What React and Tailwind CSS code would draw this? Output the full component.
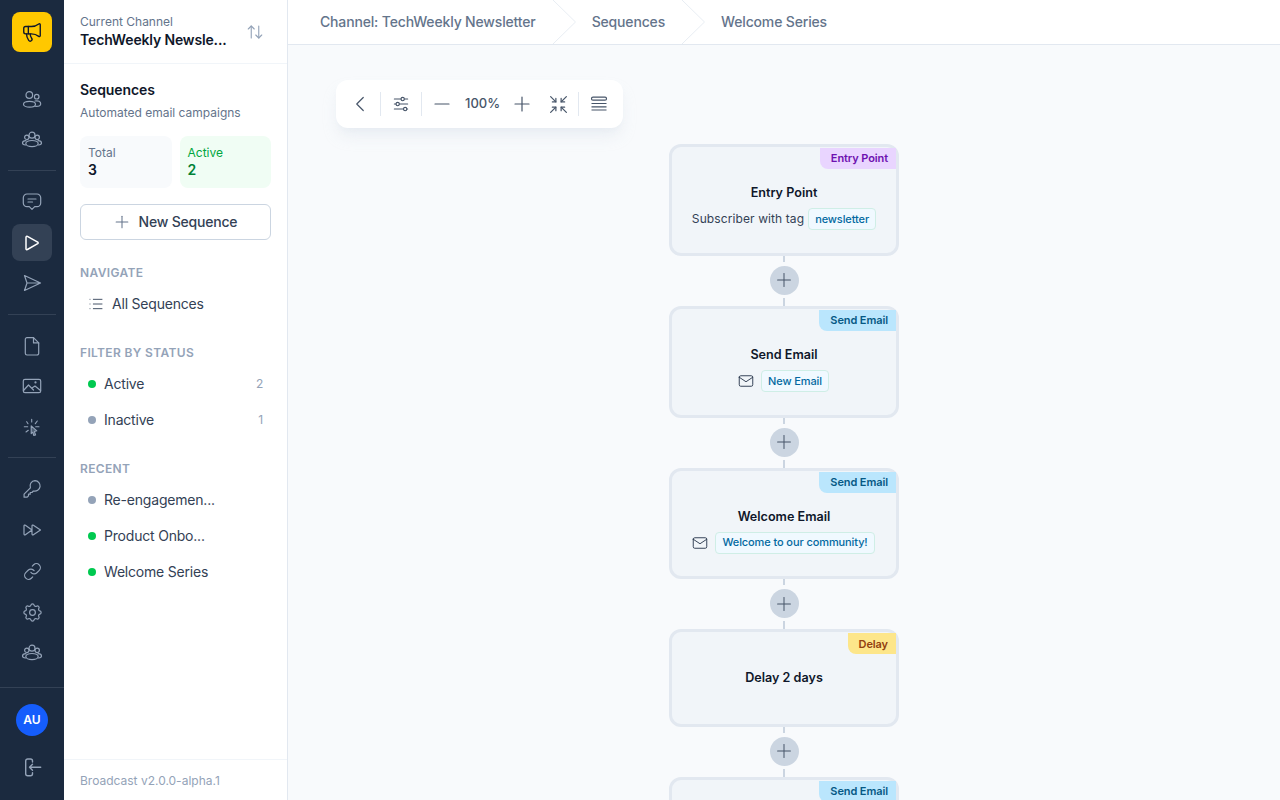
import React from 'react';
import { Megaphone, ArrowUpDown, Plus, List, ChevronLeft, Minus, Link } from 'lucide-react';
import { TbSettings, TbAdjustmentsHorizontal, TbArrowsMinimize, TbMail } from 'react-icons/tb';

// rail icons, drawn on a 24 box
const RailSvg = ({ children, strokeWidth = 1.2 }) => (
  <svg className="w-6 h-6" viewBox="0 0 24 24" fill="none" stroke="currentColor" strokeWidth={strokeWidth} strokeLinecap="round" strokeLinejoin="round">
    {children}
  </svg>
);

const UsersIcon = () => (
  <RailSvg>
    <circle cx="9.3" cy="8" r="3.3" />
    <circle cx="16.7" cy="9.7" r="2.3" />
    <ellipse cx="9.5" cy="17.2" rx="6" ry="2.9" />
    <path d="M15 14c3-.7 5.9.5 5.7 3-.1 1.5-2 2.5-5 2.4" />
  </RailSvg>
);

const GroupIcon = () => (
  <RailSvg>
    <circle cx="12" cy="7.2" r="3" />
    <circle cx="6.8" cy="9.3" r="2.2" />
    <circle cx="17.2" cy="9.3" r="2.2" />
    <ellipse cx="12" cy="15.6" rx="6.2" ry="3.1" />
    <path d="M6 12.7c-2 .1-3.5 1-3.5 2.2 0 1 1.2 1.8 3 2.1M18 12.7c2 .1 3.5 1 3.5 2.2 0 1-1.2 1.8-3 2.1" />
  </RailSvg>
);

const MessageIcon = () => (
  <RailSvg>
    <path d="M7 4h10a3.7 3.7 0 0 1 3.7 3.7V13a3.7 3.7 0 0 1-3.7 3.7h-2.3L12 19.4l-2.7-2.7H7A3.7 3.7 0 0 1 3.3 13V7.7A3.7 3.7 0 0 1 7 4z" />
    <path d="M8 9h8M8 12h4.5" />
  </RailSvg>
);

const PlayIcon = () => (
  <RailSvg strokeWidth={1.5}>
    <path d="M6 6.2c0-.8.8-1.2 1.4-.9l10.3 5.8c.6.4.6 1.2 0 1.6L7.4 18.5c-.6.4-1.4 0-1.4-.8z" />
  </RailSvg>
);

const SendIcon = () => (
  <RailSvg>
    <path d="M4.5 4.5 20.5 12 4.5 19.5 7 12zM7 12h13.5" />
  </RailSvg>
);

const FileIcon = () => (
  <RailSvg>
    <path d="M7 3.7h6.5l5.2 5.2v10.4a1.7 1.7 0 0 1-1.7 1.7H7a1.7 1.7 0 0 1-1.7-1.7V5.4A1.7 1.7 0 0 1 7 3.7z" />
    <path d="M13.5 3.7v5.2h5.2" />
  </RailSvg>
);

const PhotoIcon = () => (
  <RailSvg>
    <rect x="3.3" y="5.3" width="17.4" height="13.4" rx="1.7" />
    <path d="M3.5 16.5l5-5.5 5 5M12 14l3-2 5.5 4.5" />
    <circle cx="15.5" cy="8.4" r=".5" />
  </RailSvg>
);

const ClickIcon = () => (
  <RailSvg strokeWidth={1.1}>
    <path d="M11.7 4.3V7M4.3 11.7h3.4M6.7 6.7 8 8.7M17.3 6l-2 2.7M19 11.7h-3.3M8.3 15.3 6 17" />
    <path d="M11.2 10.8l5.6 5-2.4.8 1.2 3.4-1.8.5-1-3.3-1.6 1.4z" fill="currentColor" fillOpacity=".45" />
  </RailSvg>
);

const KeyIcon = () => (
  <RailSvg>
    <path d="M15 3.6a5.3 5.3 0 1 1-1.6 10.4l-1.5 1.5h-1.7v1.7H8.5v1.7l-1.3 1.3H4.1v-3.1l6.3-6.3A5.3 5.3 0 0 1 15 3.6z" />
  </RailSvg>
);

const ForwardIcon = () => (
  <RailSvg>
    <path d="M4 8c0-.8.8-1.2 1.4-.8L12 12l-6.6 4.8c-.6.4-1.4 0-1.4-.8zM12 8c0-.8.8-1.2 1.4-.8L20.5 12l-7.1 4.8c-.6.4-1.4 0-1.4-.8z" />
  </RailSvg>
);

const LinkIcon = () => <Link className="w-[19px] h-[19px]" strokeWidth={1.5} />;
const SettingsIcon = () => <TbSettings className="w-[23px] h-[23px]" style={{ strokeWidth: 1.25 }} />;

const LogoutIcon = () => (
  <RailSvg strokeWidth={1.4}>
    <path d="M12.5 7V6a2 2 0 0 0-2-2H7.7a2 2 0 0 0-2 2v12.7a2 2 0 0 0 2 2h2.8a2 2 0 0 0 2-2v-1" />
    <path d="M20.7 12.3H9.5m3-3-3 3 3 3" />
  </RailSvg>
);

const railGroups = [
  [UsersIcon, GroupIcon],
  [MessageIcon, PlayIcon, SendIcon],
  [FileIcon, PhotoIcon, ClickIcon],
  [KeyIcon, ForwardIcon, LinkIcon, SettingsIcon, GroupIcon],
];

const Rail = () => (
  <aside className="w-16 h-full shrink-0 bg-[#1b2a3f] flex flex-col items-center">
    <div className="w-10 h-10 mt-3 rounded-lg bg-[#ffc800] flex items-center justify-center">
      <Megaphone className="w-[22px] h-[22px] text-[#0f172a]" strokeWidth={1.5} />
    </div>
    <div className="flex-1 w-full pt-[28px]">
      {railGroups.map((group, i) => (
        <div key={i} className={i > 0 ? 'mx-2 mt-[12px] pt-[12.5px] border-t border-[#334155]' : ''}>
          <div className={`flex flex-col ${i === 0 || i === 3 ? 'gap-1' : 'gap-[3.5px]'}`}>
            {group.map((Icon, j) => {
              const active = i === 1 && j === 1;
              return (
                <div
                  key={j}
                  className={`w-10 h-[37px] mx-auto rounded-lg flex items-center justify-center ${active ? 'bg-[#334155] text-white' : 'text-[#94a3b8]'}`}
                >
                  <Icon />
                </div>
              );
            })}
          </div>
        </div>
      ))}
    </div>
    <div className="w-full h-[113px] border-t border-[#334155] flex flex-col items-center pt-[16px]">
      <div className="w-8 h-8 rounded-full bg-[#155dfc] text-white text-xs font-semibold flex items-center justify-center">AU</div>
      <div className="mt-[19px] text-[#94a3b8]"><LogoutIcon /></div>
    </div>
  </aside>
);

const SectionLabel = ({ children }) => (
  <div className="px-4 text-xs font-semibold tracking-[0.35px] text-[#94a3b8] uppercase leading-4">{children}</div>
);

const NavRow = ({ dot, label, count }) => (
  <div className="h-9 pl-6 pr-6 flex items-center text-sm tracking-[-0.2px] text-[#334155]">
    <span className={`w-2 h-2 rounded-full mr-2 shrink-0 ${dot === 'green' ? 'bg-[#00c950]' : 'bg-[#94a3b8]'}`} />
    <span className="flex-1">{label}</span>
    {count && <span className="text-xs text-[#94a3b8]">{count}</span>}
  </div>
);

const Panel = () => (
  <aside className="w-[224px] h-full shrink-0 bg-white border-r border-[#e2e8f0] flex flex-col">
    <div className="h-16 shrink-0 border-b border-[#f1f5f9] pl-4 pr-[23px] flex items-center justify-between">
      <div>
        <div className="text-xs leading-4 text-[#64748b]">Current Channel</div>
        <div className="text-sm leading-5 font-semibold tracking-[-0.15px] text-[#0f172a]">TechWeekly Newsle...</div>
      </div>
      <ArrowUpDown className="w-[18px] h-[18px] text-[#94a3b8]" strokeWidth={1.5} />
    </div>
    <div className="flex-1">
      <div className="px-4 pt-4">
        <div className="text-sm leading-5 font-semibold tracking-[-0.1px] text-[#0f172a]">Sequences</div>
        <div className="mt-[5px] text-xs leading-4 text-[#64748b]">Automated email campaigns</div>
        <div className="mt-[15px] grid grid-cols-2 gap-2">
          <div className="h-[52px] rounded-lg bg-[#f8fafc] px-2 pt-[9px]">
            <div className="text-xs leading-4 text-[#64748b]">Total</div>
            <div className="-mt-px text-sm leading-5 font-semibold text-[#0f172a]">3</div>
          </div>
          <div className="h-[52px] rounded-lg bg-[#f0fdf4] px-2 pt-[9px]">
            <div className="text-xs leading-4 text-[#00a63e]">Active</div>
            <div className="-mt-px text-sm leading-5 font-semibold text-[#008236]">2</div>
          </div>
        </div>
        <div className="mt-4 h-9 pr-[2px] rounded-md border border-[#cbd5e1] flex items-center justify-center gap-[7px] text-sm font-medium tracking-[-0.2px] text-[#334155]">
          <Plus className="w-5 h-5 text-[#64748b]" strokeWidth={1.25} />
          New Sequence
        </div>
      </div>
      <div className="mt-[25px]">
        <SectionLabel>Navigate</SectionLabel>
        <div className="mt-[5px] h-9 pl-6 flex items-center gap-2 text-sm tracking-[-0.2px] text-[#334155]">
          <List className="w-4 h-4 text-[#475569]" strokeWidth={1.5} />
          All Sequences
        </div>
      </div>
      <div className="mt-[23px]">
        <SectionLabel>Filter by status</SectionLabel>
        <div className="mt-[5px]">
          <NavRow dot="green" label="Active" count="2" />
          <NavRow dot="gray" label="Inactive" count="1" />
        </div>
      </div>
      <div className="mt-[23px]">
        <SectionLabel>Recent</SectionLabel>
        <div className="mt-[5px]">
          <NavRow dot="gray" label="Re-engagemen..." />
          <NavRow dot="green" label="Product Onbo..." />
          <NavRow dot="green" label="Welcome Series" />
        </div>
      </div>
    </div>
    <div className="h-[41px] shrink-0 border-t border-[#f1f5f9] px-4 pt-px flex items-center text-xs text-[#94a3b8]">Broadcast v2.0.0-alpha.1</div>
  </aside>
);

const Crumb = ({ children, last }) => (
  <div className="h-full flex items-center relative pl-8 pr-[17px]">
    <span className="text-sm font-medium tracking-[-0.16px] text-[#64748b]">{children}</span>
    {!last && (
      <svg className="absolute top-0 -right-[23px] w-[23px] h-11" viewBox="0 0 23 44" fill="none">
        <path d="M0 0L22.5 22L0 44" stroke="#e8edf3" strokeWidth="1" />
      </svg>
    )}
  </div>
);

const Toolbar = () => (
  <div className="absolute left-12 top-[35px] h-12 w-[287px] rounded-xl bg-white shadow-lg shadow-slate-200/70 flex items-center text-[#475569]">
    <ChevronLeft className="ml-[11px] w-[26px] h-[26px]" strokeWidth={1.1} />
    <div className="ml-[7px] w-px h-6 bg-[#e2e8f0]" />
    <TbAdjustmentsHorizontal className="ml-[10px] w-5 h-5" style={{ strokeWidth: 1.3 }} />
    <div className="ml-[10px] w-px h-6 bg-[#e2e8f0]" />
    <Minus className="ml-[8px] w-6 h-6" strokeWidth={1.2} />
    <span className="ml-[11px] text-[13px] font-medium text-[#475569]">100%</span>
    <Plus className="ml-[10px] w-6 h-6" strokeWidth={1.2} />
    <TbArrowsMinimize className="ml-[13.5px] w-[21px] h-[21px]" style={{ strokeWidth: 1.4 }} />
    <div className="ml-[9.5px] w-px h-6 bg-[#e2e8f0]" />
    <svg className="ml-[10px] w-5 h-5" viewBox="0 0 20 20" fill="none" stroke="currentColor" strokeWidth="1.2">
      <rect x="2.5" y="3.2" width="15" height="3" rx="1.5" />
      <path d="M2.5 9.5h15M2.5 12.8h15M2.5 16h15" />
    </svg>
  </div>
);

const badgeStyles = {
  entry: 'bg-[#e9d5ff] text-[#6e11b0]',
  send: 'bg-[#bae6fd] text-[#075985]',
  delay: 'bg-[#fde68a] text-[#92400e]',
};

const Node = ({ kind, badge, title, h, children }) => (
  <div className={`relative w-[230px] shrink-0 rounded-xl border-[3px] border-[#e2e8f0] bg-[#f1f5f9] flex flex-col items-center pt-[38px] ${h}`}>
    <div className={`absolute top-[1px] right-0 h-[21px] pl-[11px] pr-[8px] rounded-bl-lg text-[11px] font-semibold tracking-[-0.1px] flex items-center ${badgeStyles[kind]}`}>{badge}</div>
    <div className="text-[12.6px] leading-4 font-semibold text-[#0f172a]">{title}</div>
    {children}
  </div>
);

const Tag = ({ children }) => (
  <span className="h-[22px] px-[6px] rounded border border-[#cfeee6] bg-[#f0f9ff] text-[11px] font-medium tracking-[-0.1px] text-[#0369a1] flex items-center">{children}</span>
);

const Connector = () => (
  <div className="h-[50px] shrink-0 flex flex-col items-center">
    <div className="w-[2px] h-[6px] bg-[#cbd5e1]" />
    <div className="mt-1 w-[29px] h-[29px] rounded-full bg-[#cbd5e1] flex items-center justify-center text-[#475569]">
      <Plus className="w-[22px] h-[22px]" strokeWidth={1.1} />
    </div>
    <div className="mt-[3px] w-[2px] h-[8px] bg-[#cbd5e1]" />
  </div>
);

const MailLine = ({ children }) => (
  <div className="mt-[7px] mr-[2px] flex items-center gap-[6px]">
    <TbMail className="w-[18px] h-[18px] text-[#334155]" style={{ strokeWidth: 1.3 }} />
    <Tag>{children}</Tag>
  </div>
);

export default function App() {
  return (
    <div className="w-[1280px] h-[800px] overflow-hidden flex bg-white font-['Inter',sans-serif]">
      <Rail />
      <Panel />
      <main className="flex-1 min-w-0 h-full flex flex-col bg-[#f8fafc]">
        <div className="h-[45px] shrink-0 bg-white border-b border-[#e2e8f0] flex">
          <Crumb>Channel: TechWeekly Newsletter</Crumb>
          <Crumb><span className="pl-[7px]">Sequences</span></Crumb>
          <Crumb last><span className="pl-[7px]">Welcome Series</span></Crumb>
        </div>
        <div className="relative flex-1 overflow-hidden flex flex-col items-center pt-[99px]">
          <Toolbar />
          <Node kind="entry" badge="Entry Point" title="Entry Point" h="h-[111.75px]">
            <div className="mt-[7px] flex items-center gap-1 text-xs tracking-[0.1px] text-[#334155]">
              Subscriber with tag <Tag>newsletter</Tag>
            </div>
          </Node>
          <Connector />
          <Node kind="send" badge="Send Email" title="Send Email" h="h-[111.75px]">
            <MailLine>New Email</MailLine>
          </Node>
          <Connector />
          <Node kind="send" badge="Send Email" title="Welcome Email" h="h-[111.75px]">
            <MailLine>Welcome to our community!</MailLine>
          </Node>
          <Connector />
          <Node kind="delay" badge="Delay" title="Delay 2 days" h="h-[97.5px]" />
          <Connector />
          <Node kind="send" badge="Send Email" title="" h="h-[111.75px]" />
        </div>
      </main>
    </div>
  );
}
